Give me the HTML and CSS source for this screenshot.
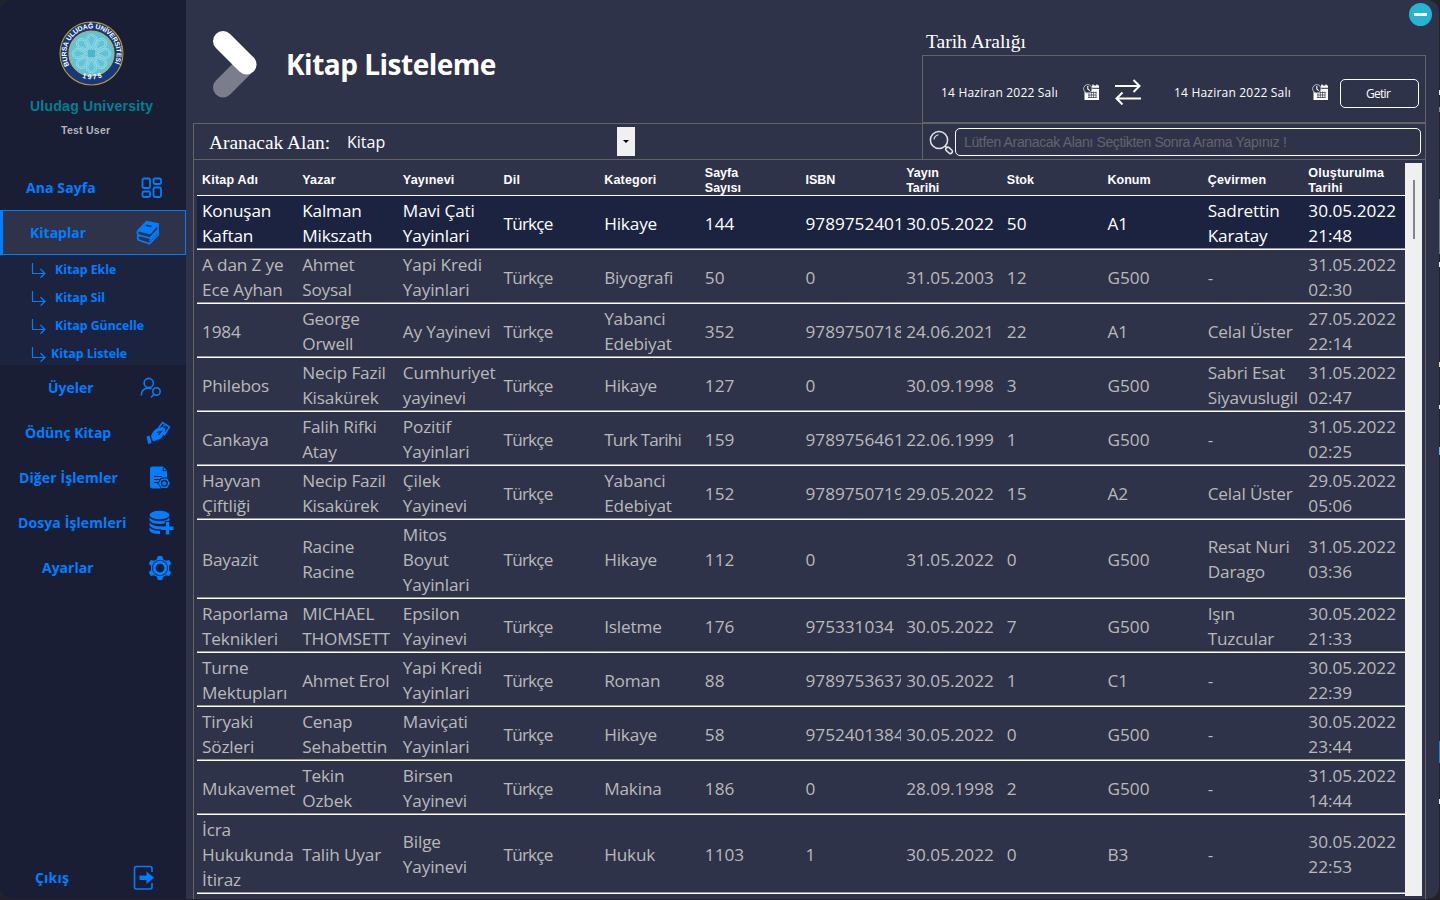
FILE: index.html
```html
<!DOCTYPE html>
<html lang="tr">
<head>
<meta charset="utf-8">
<title>Kitap Listeleme</title>
<link rel="stylesheet" href="styles.css">
</head>
<body>
<svg class="defs" width="0" height="0">
  <defs>
    <symbol id="arrow" viewBox="0 0 16 16"><path d="M1.500 1v10.500h12.500M9.500 7l4.500 4.500-4.500 4.300" fill="none" stroke="currentColor" stroke-width="1.200"/></symbol>
    <symbol id="cal" viewBox="0 0 17 17"><path d="M1.500 5V16H16V1.500H9V5Z" fill="#fff"/><path d="M10 0.500v2.500M14 0.500v2.500" stroke="#fff" stroke-width="1.400"/><path d="M8.500 4.300H16" stroke="#2f334a" stroke-width="1"/><path d="M5 8.500h8.500M5 11h8.500M5 13.500h8.500M6 7.500v6.500M8.300 7.500v6.500M10.600 7.500v6.500M13 7.500v6.500" stroke="#2f334a" stroke-width=".7" fill="none"/><circle cx="4.800" cy="4.800" r="4.200" fill="#2f334a" stroke="#b9bbc6" stroke-width="1"/><path d="M4.800 2v3l1.900 1.600" stroke="#fff" stroke-width="1.100" fill="none"/></symbol>
  </defs>
</svg>
<div class="window">
  <aside class="sidebar">
    <div class="brand">
      <svg class="logo" viewBox="0 0 64 64">
        <defs>
          <path id="ringTop" d="M11.300 45.500A24.700 24.700 0 1 1 52.700 45.500"/>
          <path id="ringBottom" d="M16 52.500A28.800 28.800 0 0 0 48 52.500"/>
          <g id="petal"><path d="M32 29 28 21.500A5.200 5.200 0 1 1 36 21.500Z"/><path d="M32 26.500 29.500 20.700A3.600 3.600 0 1 1 34.500 20.700Z"/></g>
        </defs>
        <circle cx="32" cy="32" r="31" fill="#15387f" stroke="#b79a25" stroke-width="1.100"/>
        <circle cx="32" cy="32" r="22.200" fill="#61c3d5" stroke="#c5b341" stroke-width="1.100"/>
        <g fill="none" stroke="#a5e0e8" stroke-width=".7">
          <use href="#petal"/><use href="#petal" transform="rotate(45 32 32)"/><use href="#petal" transform="rotate(90 32 32)"/><use href="#petal" transform="rotate(135 32 32)"/><use href="#petal" transform="rotate(180 32 32)"/><use href="#petal" transform="rotate(225 32 32)"/><use href="#petal" transform="rotate(270 32 32)"/><use href="#petal" transform="rotate(315 32 32)"/>
        </g>
        <rect x="28.500" y="28.500" width="7" height="7" fill="#4fb4c9"/>
        <text class="logo-text"><textPath href="#ringTop" startOffset="2" textLength="99">BURSA ULUDAĞ ÜNİVERSİTESİ</textPath></text>
        <text class="logo-year"><textPath href="#ringBottom" startOffset="7.500" textLength="20">1975</textPath></text>
      </svg>
      <div class="brand-name">Uludag University</div>
      <div class="brand-user">Test User</div>
    </div>
    <nav class="menu">
      <div class="item home"><span>Ana Sayfa</span>
        <svg width="22" height="22" viewBox="0 0 22 22" fill="none" stroke="currentColor" stroke-width="1.800"><rect x="1.500" y="1.500" width="7.500" height="9.500" rx="1.500"/><rect x="12.500" y="1.500" width="7.500" height="5.500" rx="1.500"/><rect x="1.500" y="14.500" width="7.500" height="5.500" rx="1.500"/><rect x="12.500" y="10.500" width="7.500" height="9.500" rx="1.500"/></svg></div>
      <div class="item books"><span>Kitaplar</span>
        <svg width="24" height="26" viewBox="0 0 24 26"><path d="M10.500 1.500 22.500 4 14 13.500 2 10.500Z" fill="currentColor" stroke="currentColor" stroke-width="1.500" stroke-linejoin="round"/><path d="M10 5.200 15.500 6.400" stroke="#2f334a" stroke-width="1.500"/><path d="M2 10.500Q.7 13 2.300 15L14 18 22 9.500V4.500M2.300 15Q1 17.500 2.500 20L13.500 23.800 22 15V10M13.500 21 22 12" fill="none" stroke="currentColor" stroke-width="1.700"/></svg></div>
      <div class="sub">
        <div class="sub-item"><svg width="16" height="16"><use href="#arrow"/></svg><span>Kitap Ekle</span></div>
        <div class="sub-item"><svg width="16" height="16"><use href="#arrow"/></svg><span>Kitap Sil</span></div>
        <div class="sub-item"><svg width="16" height="16"><use href="#arrow"/></svg><span>Kitap Güncelle</span></div>
        <div class="sub-item current"><svg width="16" height="16"><use href="#arrow"/></svg><span>Kitap Listele</span></div>
      </div>
      <div class="item members"><span>Üyeler</span>
        <svg width="22" height="22" viewBox="0 0 22 22" fill="none" stroke="currentColor" stroke-width="1.600"><circle cx="8.700" cy="6" r="4.600"/><path d="M1.300 18.500C1.300 13.500 4.500 11 8.500 11c1.200 0 2.200.3 3 .7"/><circle cx="16.500" cy="14.500" r="3.700"/><path d="M14 17.300 11 20.500"/></svg></div>
      <div class="item loan"><span>Ödünç Kitap</span>
        <svg width="25" height="24" viewBox="0 0 25 24"><path d="M.5 15.500 3.500 14.500 5.500 22 2.200 23Z" fill="currentColor"/><path d="M5 15C6 11 9 8 12 7L17 5.800 19 8 19.500 12 14 18 7 20.500Z" fill="currentColor"/><path d="M12.500 7 16.500 1.500 23.500 6 18 14.500" fill="none" stroke="currentColor" stroke-width="1.500"/><path d="M17 4.300h2v2.200" fill="none" stroke="currentColor"/><path d="M11 11.500 15.500 10.500 12.500 14" fill="none" stroke="#191e35" stroke-width="1.100"/></svg></div>
      <div class="item other"><span>Diğer İşlemler</span>
        <svg width="22" height="24" viewBox="0 0 22 24"><path d="M3.500.5H14L18 4.500V14L12 22.500H3.500Q1 22.500 1 20V3Q1 .5 3.500.5Z" fill="currentColor"/><path d="M14.300 1.500v3.200h3M5 10.500h8M5 13.500h6M5 16.500h4" fill="none" stroke="#191e35" stroke-width="1.100"/><path d="M12.300 12h6l3.200 5.300-3.200 5.300h-6l-3.200-5.300Z" fill="currentColor" stroke="#191e35" stroke-width="1"/><circle cx="15.300" cy="17.300" r="2.800" fill="none" stroke="#191e35" stroke-width="1.400"/></svg></div>
      <div class="item files"><span>Dosya İşlemleri</span>
        <svg width="25" height="25" viewBox="0 0 25 25"><ellipse cx="10.500" cy="5" rx="10" ry="4.300" fill="currentColor"/><path d="M.5 7.500Q4 11.500 10.500 11.300 17 11.500 20.500 7.500V10Q18 14 10.500 14 3 14 .5 10.500ZM.5 12.500Q4 16.500 10.500 16.300L15 15.700V19Q3 20 .5 15.500ZM.5 17.500Q4 21 11 21V24Q2 24 .5 20.500Z" fill="currentColor"/><path d="M18.500 11v13M12 17.700h13" stroke="#191e35" stroke-width="5.500"/><path d="M18.500 12v12.500M12 18.200h12.500" stroke="currentColor" stroke-width="3.400"/></svg></div>
      <div class="item settings"><span>Ayarlar</span>
        <svg width="24" height="26" viewBox="0 0 24 26"><path d="M9.800 1h4.400l1 3.200 2.800 1.600 3.200-.8 2 3.600-2.200 2.400v4l2.200 2.400-2 3.600-3.200-.8-2.800 1.600-1 3.200H9.800l-1-3.200L6 20.200l-3.200.8-2-3.600L3 15v-4L.8 8.600l2-3.600 3.200.8 2.800-1.600Z" fill="currentColor"/><circle cx="12" cy="13" r="8" fill="#191e35"/><circle cx="12" cy="13" r="5.800" fill="none" stroke="currentColor" stroke-width="2.900"/></svg></div>
    </nav>
    <div class="item exit"><span>Çıkış</span>
      <svg width="22" height="26" viewBox="0 0 22 26"><path d="M19 7V3.500Q19 1.500 17 1.500H3.500Q1.500 1.500 1.500 3.500V22Q1.500 24 3.500 24H17Q19 24 19 22V18" fill="none" stroke="currentColor" stroke-width="1.600"/><path d="M6.500 10.500h7V6.500L21 12.700 13.500 19V15h-7Z" fill="currentColor"/></svg></div>
  </aside>

  <main class="main">
    <header class="top">
      <svg class="chevron" width="46" height="70" viewBox="0 0 46 70" fill="none" stroke-linecap="round" stroke-width="20"><path d="M11 57.500 34.500 34" stroke="#7b7d8d"/><path d="M11 11 34.500 34.500" stroke="#fff"/></svg>
      <h1>Kitap Listeleme</h1>
      <div class="range">
        <div class="range-title">Tarih Aralığı</div>
        <div class="range-box">
          <span class="date">14 Haziran 2022 Salı</span>
          <svg class="cal cal1" width="17" height="17"><use href="#cal"/></svg>
          <svg class="swap" width="26" height="26" viewBox="0 0 26 26" fill="none" stroke="#fff" stroke-width="2"><path d="M0 7H24M18.500 1 24.500 7 18.500 13M26 19.500H2M7.500 13.500 1.500 19.500 7.500 25.500"/></svg>
          <span class="date">14 Haziran 2022 Salı</span>
          <svg class="cal cal2" width="17" height="17"><use href="#cal"/></svg>
          <button class="get">Getir</button>
        </div>
      </div>
      <div class="minimize"></div>
    </header>
    <section class="panel">
      <div class="filter">
        <label>Aranacak Alan:</label>
        <div class="combo"><span>Kitap</span><i></i></div>
        <div class="search">
          <svg width="25" height="25" viewBox="0 0 25 25" fill="none" stroke="#e4e5ea"><circle cx="10" cy="10" r="8.600" stroke-width="1.500"/><path d="M5 9.500A5.500 5.500 0 0 1 9.500 4.700" stroke-width="1.100"/><path d="M16 16 18.500 18.300" stroke-width="1.500"/><rect x="16.500" y="18.200" width="7.500" height="4" rx="2" transform="rotate(43 20 20)" stroke-width="1.500"/></svg>
          <div class="field">Lütfen Aranacak Alanı Seçtikten Sonra Arama Yapınız !</div>
        </div>
      </div>
      <div class="grid-wrap">
        <div class="table">
          <div class="row head"><div>Kitap Adı</div><div>Yazar</div><div>Yayınevi</div><div>Dil</div><div>Kategori</div><div>Sayfa<br>Sayısı</div><div>ISBN</div><div>Yayın<br>Tarihi</div><div>Stok</div><div>Konum</div><div>Çevirmen</div><div>Oluşturulma<br>Tarihi</div></div>
          <div class="row selected"><div>Konuşan<br>Kaftan</div><div>Kalman<br>Mikszath</div><div>Mavi Çati<br>Yayinlari</div><div>Türkçe</div><div>Hikaye</div><div>144</div><div>9789752401</div><div>30.05.2022</div><div>50</div><div>A1</div><div>Sadrettin<br>Karatay</div><div>30.05.2022<br>21:48</div></div>
          <div class="row"><div>A dan Z ye<br>Ece Ayhan</div><div>Ahmet<br>Soysal</div><div>Yapi Kredi<br>Yayinlari</div><div>Türkçe</div><div>Biyografi</div><div>50</div><div>0</div><div>31.05.2003</div><div>12</div><div>G500</div><div>-</div><div>31.05.2022<br>02:30</div></div>
          <div class="row"><div>1984</div><div>George<br>Orwell</div><div>Ay Yayinevi</div><div>Türkçe</div><div>Yabanci<br>Edebiyat</div><div>352</div><div>9789750718</div><div>24.06.2021</div><div>22</div><div>A1</div><div>Celal Üster</div><div>27.05.2022<br>22:14</div></div>
          <div class="row"><div>Philebos</div><div>Necip Fazil<br>Kisakürek</div><div>Cumhuriyet<br>yayinevi</div><div>Türkçe</div><div>Hikaye</div><div>127</div><div>0</div><div>30.09.1998</div><div>3</div><div>G500</div><div>Sabri Esat<br>Siyavuslugil</div><div>31.05.2022<br>02:47</div></div>
          <div class="row"><div>Cankaya</div><div>Falih Rifki<br>Atay</div><div>Pozitif<br>Yayinlari</div><div>Türkçe</div><div class="narrow">Turk Tarihi</div><div>159</div><div>9789756461</div><div>22.06.1999</div><div>1</div><div>G500</div><div>-</div><div>31.05.2022<br>02:25</div></div>
          <div class="row"><div>Hayvan<br>Çiftliği</div><div>Necip Fazil<br>Kisakürek</div><div>Çilek<br>Yayinevi</div><div>Türkçe</div><div>Yabanci<br>Edebiyat</div><div>152</div><div>9789750719</div><div>29.05.2022</div><div>15</div><div>A2</div><div>Celal Üster</div><div>29.05.2022<br>05:06</div></div>
          <div class="row tall"><div>Bayazit</div><div>Racine<br>Racine</div><div>Mitos<br>Boyut<br>Yayinlari</div><div>Türkçe</div><div>Hikaye</div><div>112</div><div>0</div><div>31.05.2022</div><div>0</div><div>G500</div><div>Resat Nuri<br>Darago</div><div>31.05.2022<br>03:36</div></div>
          <div class="row"><div>Raporlama<br>Teknikleri</div><div>MICHAEL<br>THOMSETT</div><div>Epsilon<br>Yayinevi</div><div>Türkçe</div><div>Isletme</div><div>176</div><div>975331034</div><div>30.05.2022</div><div>7</div><div>G500</div><div>Işın<br>Tuzcular</div><div>30.05.2022<br>21:33</div></div>
          <div class="row"><div>Turne<br>Mektupları</div><div>Ahmet Erol</div><div>Yapi Kredi<br>Yayinlari</div><div>Türkçe</div><div>Roman</div><div>88</div><div>9789753637</div><div>30.05.2022</div><div>1</div><div>C1</div><div>-</div><div>30.05.2022<br>22:39</div></div>
          <div class="row"><div>Tiryaki<br>Sözleri</div><div>Cenap<br>Sehabettin</div><div>Maviçati<br>Yayinlari</div><div>Türkçe</div><div>Hikaye</div><div>58</div><div>9752401384</div><div>30.05.2022</div><div>0</div><div>G500</div><div>-</div><div>30.05.2022<br>23:44</div></div>
          <div class="row"><div>Mukavemet</div><div>Tekin<br>Ozbek</div><div>Birsen<br>Yayinevi</div><div>Türkçe</div><div>Makina</div><div>186</div><div>0</div><div>28.09.1998</div><div>2</div><div>G500</div><div>-</div><div>31.05.2022<br>14:44</div></div>
          <div class="row tall"><div>İcra<br>Hukukunda<br>İtiraz</div><div>Talih Uyar</div><div>Bilge<br>Yayinevi</div><div>Türkçe</div><div>Hukuk</div><div>1103</div><div>1</div><div>30.05.2022</div><div>0</div><div>B3</div><div>-</div><div>30.05.2022<br>22:53</div></div>
        </div>
        <div class="scrollbar"><i></i></div>
      </div>
    </section>
  </main>
</div>
</body>
</html>
```
FILE: styles.css
```css
* { box-sizing: border-box; }
body {
  margin: 0;
  width: 1440px;
  height: 900px;
  overflow: hidden;
  background:
    linear-gradient(#e8e8e8, #e8e8e8) 1439px 90px / 1px 5px no-repeat,
    linear-gradient(#8a8a8a, #8a8a8a) 1439px 107px / 1px 5px no-repeat,
    linear-gradient(#63788c, #63788c) 1439px 199px / 1px 55px no-repeat,
    linear-gradient(#e8e8e8, #e8e8e8) 1439px 262px / 1px 5px no-repeat,
    linear-gradient(#e8d9a0, #e8d9a0) 1439px 362px / 1px 5px no-repeat,
    linear-gradient(#e8e8e8, #e8e8e8) 1439px 405px / 1px 4px no-repeat,
    linear-gradient(#5fb4e0, #5fb4e0) 1439px 447px / 1px 8px no-repeat,
    linear-gradient(#1a86cc, #1a86cc) 1439px 741px / 1px 22px no-repeat,
    linear-gradient(#e8e8e8, #e8e8e8) 1439px 799px / 1px 5px no-repeat,
    #232327;
  font-family: "Open Sans", sans-serif;
}
.defs { position: absolute; }
svg { display: block; flex: none; }
.window {
  display: flex;
  width: 1439px;
  height: 899px;
  border-radius: 12px;
  overflow: hidden;
  background: #2f334a;
}

/* Sidebar */
.sidebar {
  display: flex;
  flex-direction: column;
  width: 186px;
  height: 899px;
  background: #191e35;
  color: #007eff;
}
.brand { height: 165px; padding-top: 21px; }
.logo { width: 65px; height: 65px; margin-left: 59px; }
.logo-text, .logo-year {
  fill: #fff;
  font: bold 6.800px "Liberation Sans", sans-serif;
}
.brand-name, .brand-user {
  font-family: "Liberation Sans", sans-serif;
  font-weight: bold;
  white-space: nowrap;
}
.brand-name { margin: 12px 0 0 30px; font-size: 14px; line-height: 16px; letter-spacing: .25px; color: #008090; }
.brand-user { margin: 10px 0 0 61px; font-size: 10.500px; line-height: 12px; letter-spacing: .25px; color: #b4b5bd; }
.item {
  display: flex;
  align-items: center;
  justify-content: space-between;
  height: 45px;
  font-size: 14px;
  font-weight: 700;
  white-space: nowrap;
}
.home { padding: 0 23px 0 26px; letter-spacing: .1px; }
.books {
  padding: 0 25px 0 27px;
  border: 1px solid #007eff;
  border-left-width: 3px;
  background: #2f334a;
}
.members { padding: 0 24px 0 48px; }
.loan { padding: 0 15px 0 25px; }
.other { padding: 0 15px 0 19px; letter-spacing: .1px; }
.files { padding: 0 12px 0 18px; letter-spacing: .1px; }
.settings { padding: 0 14px 0 42px; }
.exit { margin: auto 0 -1px; padding: 0 31px 0 35px; letter-spacing: .2px; }
.sub { height: 110px; overflow: hidden; background: #1c233f; }
.sub-item {
  display: flex;
  align-items: center;
  gap: 8px;
  height: 28px;
  padding-left: 31px;
  font-size: 12.300px;
  font-weight: 700;
}
.sub-item svg { margin-top: 1px; }
.current { gap: 4px; }

/* Title and date range */
.main { display: flex; flex-direction: column; flex: 1; }
.top { display: flex; position: relative; height: 123px; }
.chevron { margin: 30px 0 0 26px; }
h1 {
  width: 636px;
  margin: 44px 0 0 28px;
  color: #fff;
  font-size: 28px;
  line-height: 40px;
  font-weight: 700;
  letter-spacing: -.5px;
}
.range { width: 504px; padding-top: 29px; }
.range-title { height: 26px; padding-left: 4px; color: #fff; font: 19.500px/26px "Liberation Serif", serif; }
.range-box {
  display: flex;
  align-items: center;
  height: 68px;
  padding: 7px 6px 0 18px;
  border: 1px solid #646464;
}
.date { width: 118px; color: #fff; font-size: 12px; white-space: nowrap; letter-spacing: .2px; }
.cal1 { margin-left: 24px; }
.swap { margin: -2px 33px 0 15px; }
.cal2 { margin-left: 20px; }
.get {
  width: 79px;
  height: 29px;
  margin: 1px 0 0 auto;
  padding-right: 9px;
  border: 1px solid #fff;
  border-radius: 5px;
  background: none;
  color: #fff;
  font: 12px "Open Sans", sans-serif;
  letter-spacing: -.7px;
}
.minimize {
  position: absolute;
  top: 3px;
  right: 7px;
  width: 23px;
  height: 23px;
  padding: 10px 5px;
  border-radius: 50%;
  background: #25b5d3;
}
.minimize::before { content: ""; display: block; height: 3px; background: #fff; }

/* Filter and table */
.panel {
  flex: 1;
  width: 1233px;
  margin-left: 7px;
  border: solid #646464;
  border-width: 1px 1px 0;
}
.filter { display: flex; height: 36px; border-bottom: 1px solid #646464; }
.filter label { width: 138px; padding-left: 15px; color: #fff; font: 19.400px/37px "Liberation Serif", serif; white-space: nowrap; }
.combo { display: flex; width: 303px; color: #fff; font-size: 16px; line-height: 36px; padding-left: 15px; justify-content: space-between; }
.combo i { display: flex; align-items: center; justify-content: center; width: 18px; height: 29px; margin-top: 3px; background: #f0f0f0; }
.combo i::before { content: ""; border: solid transparent; border-width: 3px 3px 0; border-top-color: #000; }
.search { display: flex; width: 503px; margin-left: auto; padding: 4px 4px 0 6px; border-left: 1px solid #646464; }
.search svg { margin-top: 2px; }
.field {
  width: 466px;
  height: 28px;
  margin-left: auto;
  padding-left: 8px;
  border: 1px solid #fff;
  border-radius: 5px;
  color: #646466;
  font: 14px/26px "Liberation Sans", sans-serif;
  letter-spacing: -.35px;
  white-space: nowrap;
}
.grid-wrap { display: flex; padding: 3px 0 0 3px; }
.table { width: 1208px; }
.row {
  display: grid;
  grid-template-columns: repeat(12, minmax(0, 1fr));
  align-items: center;
  height: 54px;
  padding-top: 1px;
  border-bottom: 1px solid #fff;
  box-shadow: inset 0 -1px #98979d;
  color: #b9b9b9;
  font-size: 17.200px;
  line-height: 25px;
  letter-spacing: -.15px;
}
.row > div { padding-left: 4.500px; white-space: nowrap; }
.row > div:first-child { padding-left: 5px; }
.row > div:nth-child(n+11) { padding-left: 4px; }
.row > div:nth-child(4), .row > .narrow { letter-spacing: -.8px; }
.row > div:nth-child(n+6):nth-child(-n+10), .row > div:nth-child(12) { letter-spacing: 0; }
.row > div:nth-child(7) { margin-right: 1px; overflow: hidden; }
.row.tall { height: 79px; padding-top: .8px; }
.row.head {
  height: 33px;
  padding: 3px 0 0;
  box-shadow: none;
  color: #fff;
  font: bold 12.500px/14.500px "Liberation Sans", sans-serif;
}
.row.head > div { letter-spacing: .2px; overflow: visible; }
.selected { background: #1b2340; color: #fff; }
.scrollbar { width: 17px; height: 733px; padding: 17px 0 0 8px; background: #f0f0f0; }
.scrollbar i { display: block; width: 2px; height: 59px; background: #858585; }
```
